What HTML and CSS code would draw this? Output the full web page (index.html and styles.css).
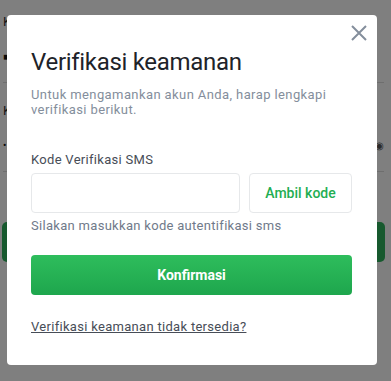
FILE: index.html
```html
<!DOCTYPE html>
<html lang="id">
  <head>
    <meta charset="UTF-8" />
    <meta name="viewport" content="width=device-width, initial-scale=1.0" />
    <title>Verifikasi keamanan</title>
    <link rel="stylesheet" href="styles.css">
  </head>
  <body>
    <div class="page">
      <div class="field">
        <p class="field-label">Kode negara</p>
        <div class="field-input"><span class="value">■</span></div>
      </div>
      <div class="field">
        <p class="field-label">Kata sandi</p>
        <div class="field-input"><span class="value">•</span><span class="eye">◉</span></div>
      </div>
      <button class="page-btn">Masuk</button>
    </div>

    <div class="overlay">
      <div class="modal">
        <button class="close" aria-label="Tutup">
          <svg width="16" height="16" viewBox="0 0 16 16">
            <path d="M1 1 L15 15 M15 1 L1 15" stroke="#848e9c" stroke-width="2" fill="none" />
          </svg>
        </button>

        <h2 class="title">Verifikasi keamanan</h2>
        <p class="desc">Untuk mengamankan akun Anda, harap lengkapi verifikasi berikut.</p>

        <label class="label" for="sms">Kode Verifikasi SMS</label>
        <div class="code-row">
          <input class="code-input" id="sms" type="text" />
          <button class="get-code">Ambil kode</button>
        </div>
        <p class="hint">Silakan masukkan kode autentifikasi sms</p>

        <button class="confirm">Konfirmasi</button>

        <a class="unavailable" href="#">Verifikasi keamanan tidak tersedia?</a>
      </div>
    </div>
  </body>
</html>
```

FILE: styles.css
```css
* {
  margin: 0;
  padding: 0;
  box-sizing: border-box;
}

body {
  font-family: Roboto, "Liberation Sans", sans-serif;
  background-color: white;
  width: 391px;
  height: 381px;
  overflow: hidden;
}

/* page behind the dialog */
.page {
  padding: 14px 7px 0 3px;
}

.field-label {
  font-size: 13px;
  color: #333;
  line-height: 16px;
}

.field-input {
  height: 53px;
  border-bottom: 1px solid #ddd;
  display: flex;
  align-items: center;
  justify-content: space-between;
  margin-bottom: 20px;
}

.value {
  font-size: 10px;
  color: #111;
}

.eye {
  font-size: 10px;
  color: #555;
}

.page-btn {
  margin-top: 30px;
  margin-left: -1px;
  width: 383px;
  height: 40px;
  border: none;
  border-radius: 5px;
  background-color: #2fb35d;
  color: white;
  font-size: 14px;
}

/* dialog */
.overlay {
  position: fixed;
  inset: 0;
  background-color: rgba(0, 0, 0, 0.5);
  padding: 15px 0 0 7px;
}

.modal {
  position: relative;
  width: 370px;
  height: 350px;
  background-color: white;
  border-radius: 4px;
  padding: 31px 25px 0 24px;
}

.close {
  position: absolute;
  top: 10px;
  right: 10px;
  width: 16px;
  height: 16px;
  border: none;
  background: none;
  cursor: pointer;
  display: flex;
}

.title {
  font-size: 24px;
  font-weight: 400;
  letter-spacing: -0.3px;
  color: #1e2329;
  line-height: 32px;
}

.desc {
  margin-top: 9px;
  font-size: 13px;
  line-height: 15px;
  letter-spacing: 0.4px;
  color: #848e9c;
  padding-right: 25px;
}

.label {
  display: block;
  margin-top: 34px;
  font-size: 13px;
  line-height: 18px;
  letter-spacing: 0.3px;
  color: #474d57;
}

.code-row {
  display: flex;
  gap: 9px;
  margin-top: 4px;
}

.code-input {
  width: 209px;
  height: 40px;
  border: 1px solid #e6e8ea;
  border-radius: 4px;
  outline: none;
}

.get-code {
  flex: 1;
  height: 40px;
  border: 1px solid #e6e8ea;
  border-radius: 4px;
  background: white;
  color: #1fae52;
  font-family: inherit;
  font-size: 14px;
  font-weight: 500;
}

.hint {
  margin-top: 4px;
  font-size: 13px;
  line-height: 18px;
  letter-spacing: 0.3px;
  color: #707a8a;
}

.confirm {
  display: block;
  width: 100%;
  height: 40px;
  margin-top: 20px;
  border: none;
  border-radius: 4px;
  background: linear-gradient(#2ebd5c, #1ea64d);
  color: white;
  font-family: inherit;
  font-size: 14px;
  font-weight: 700;
}

.unavailable {
  display: inline-block;
  margin-top: 23px;
  font-size: 13px;
  line-height: 18px;
  letter-spacing: 0.3px;
  color: #474d57;
}
```
